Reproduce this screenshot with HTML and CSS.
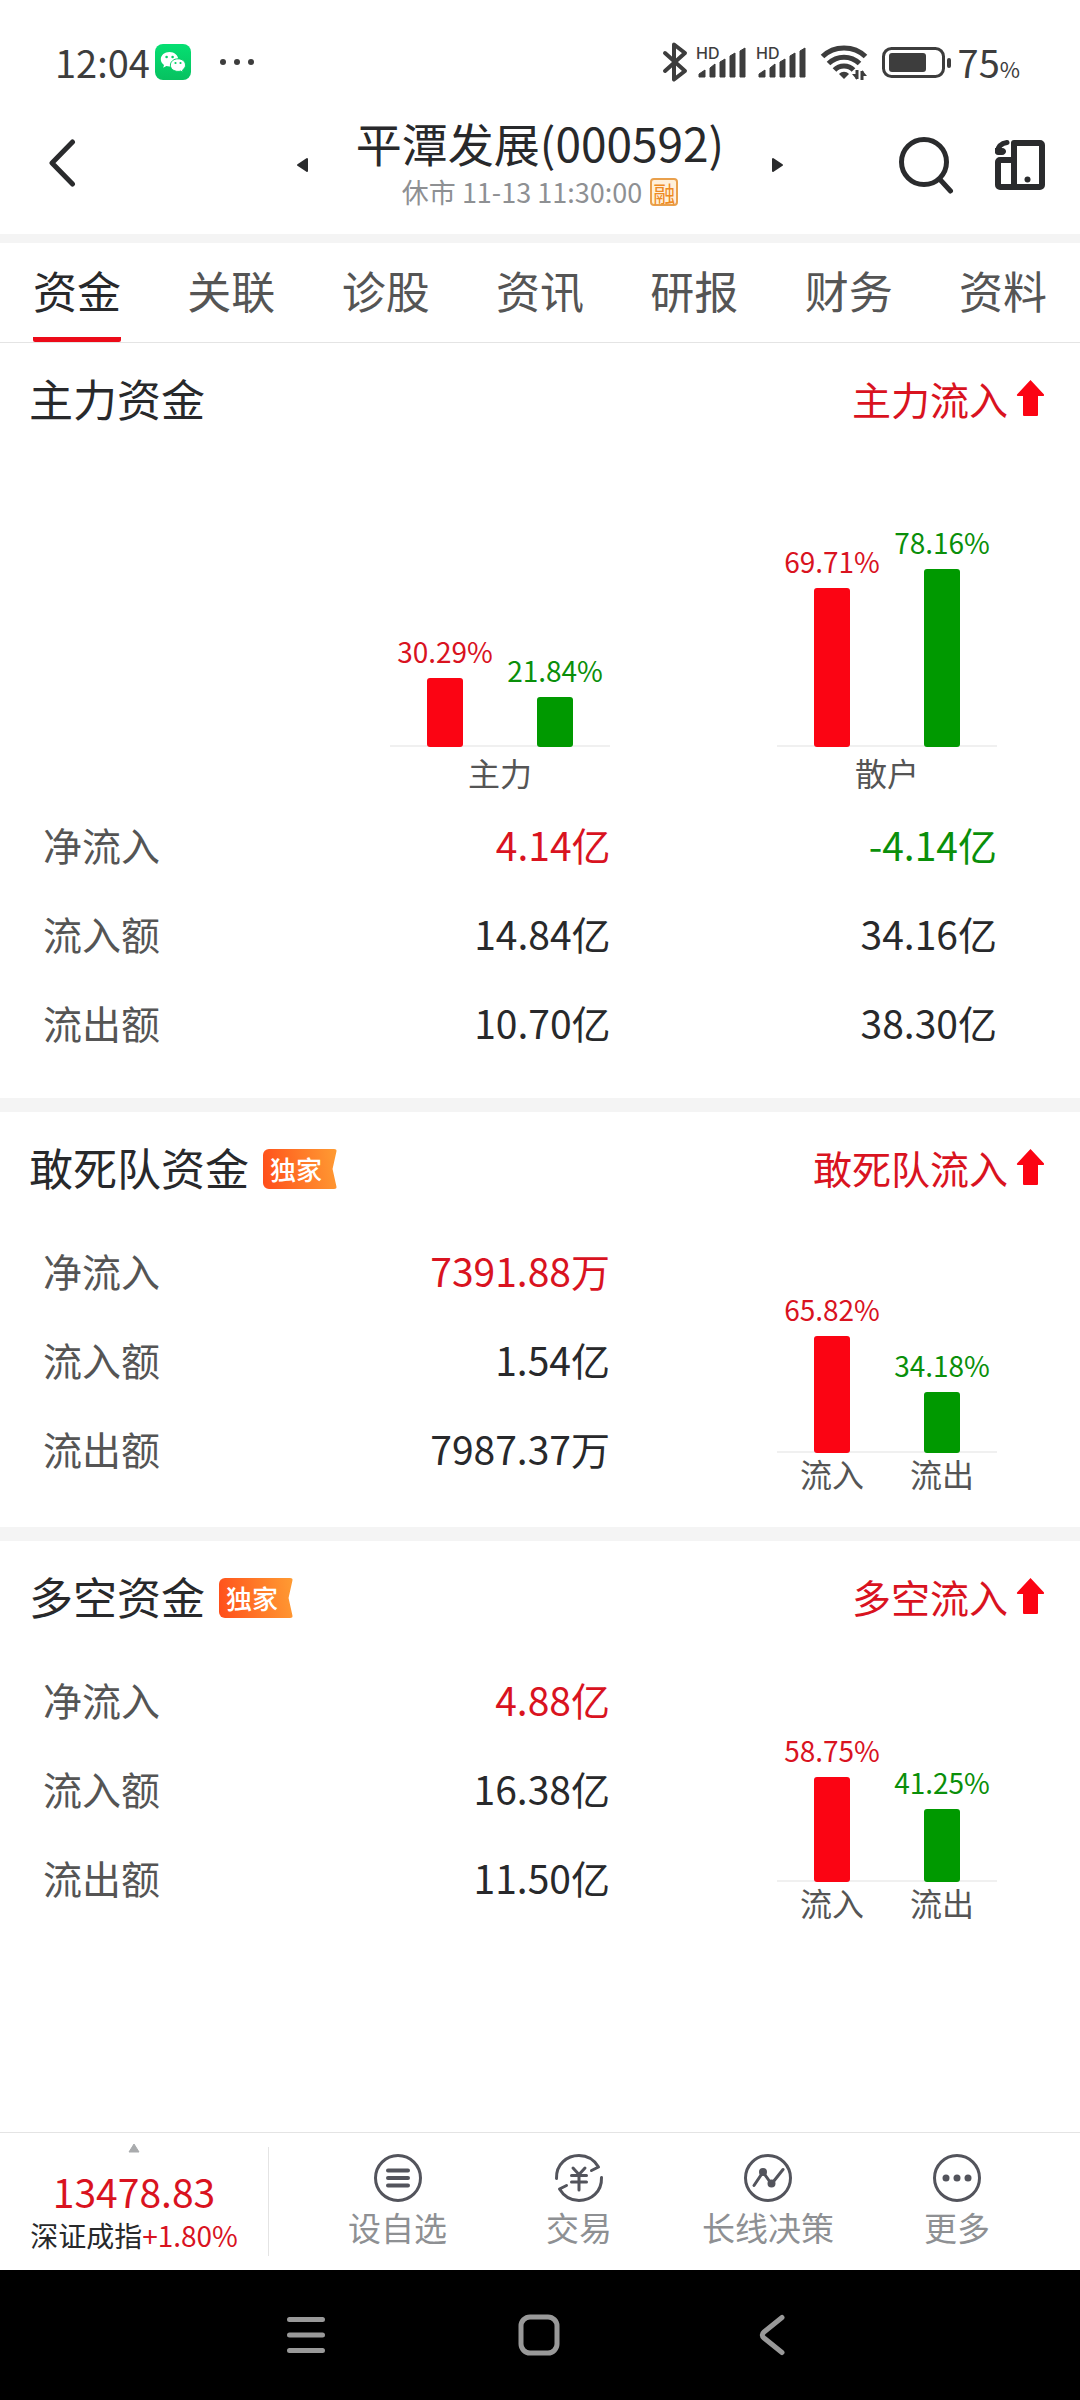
FILE: index.html
```html
<!DOCTYPE html>
<html lang="zh-CN">
<head>
<meta charset="utf-8">
<meta name="viewport" content="width=device-width">
<title>平潭发展(000592) 资金</title>
<link rel="stylesheet" href="styles.css">
</head>
<body>
<div class="status-bar">
  <div class="status-left">
    <span class="clock">12:04</span>
    <svg class="wechat" width="36" height="36" viewBox="0 0 36 36" aria-hidden="true">
      <defs><linearGradient id="wx" x1="0" y1="0" x2="0" y2="1"><stop offset="0" stop-color="#05df72"/><stop offset="1" stop-color="#07c160"/></linearGradient></defs>
      <rect width="36" height="36" rx="8" fill="url(#wx)"/>
      <path d="M14.500 8C9.600 8 5.800 11.200 5.800 15.300c0 2.400 1.200 4.300 3.200 5.700l-.8 2.700 3.200-1.600c1 .3 2 .4 3.100.4 4.900 0 8.700-3.200 8.700-7.200S19.400 8 14.500 8z" fill="#fff"/>
      <path d="M23 14.800c-4.400 0-7.600 2.900-7.600 6.300 0 3.500 3.200 6.300 7.600 6.300.9 0 1.800-.1 2.600-.4l2.500 1.300-.6-2.200c1.800-1.200 3-3 3-5 0-3.500-3.300-6.300-7.500-6.300z" fill="#fff" stroke="#06cf68" stroke-width="1"/>
      <circle cx="11.600" cy="13" r="1.300" fill="#06cf68"/><circle cx="17.600" cy="13" r="1.300" fill="#06cf68"/>
      <circle cx="20.500" cy="19" r="1.100" fill="#06cf68"/><circle cx="25.500" cy="19" r="1.100" fill="#06cf68"/>
    </svg>
    <svg width="36" height="8" viewBox="0 0 36 8" fill="#3d3d3d" aria-hidden="true"><circle cx="4" cy="4" r="3"/><circle cx="18" cy="4" r="3"/><circle cx="32" cy="4" r="3"/></svg>
  </div>
  <div class="status-right">
    <svg width="26" height="42" viewBox="0 0 26 42" fill="none" stroke="#3d3d3d" stroke-width="4" stroke-linecap="round" stroke-linejoin="round" aria-hidden="true"><path d="M3 12 23 30 12 38.500V3.500L23 12 3 30"/></svg>
    <svg class="signal" width="52" height="38" viewBox="0 0 52 38" aria-hidden="true">
      <text class="hd" x="0" y="16">HD</text>
      <path d="M3 34v-3l6-4v7zM14 34V25l5-4v13zM24 34V19l5-3v18zM34 34V13l5-3v24zM44 34V8l5-3v29z" fill="#3d3d3d" stroke="#3d3d3d" stroke-linejoin="round"/>
    </svg>
    <svg class="signal" width="52" height="38" viewBox="0 0 52 38" aria-hidden="true">
      <text class="hd" x="0" y="16">HD</text>
      <path d="M3 34v-3l6-4v7zM14 34V25l5-4v13zM24 34V19l5-3v18zM34 34V13l5-3v24zM44 34V8l5-3v29z" fill="#3d3d3d" stroke="#3d3d3d" stroke-linejoin="round"/>
    </svg>
    <svg class="wifi" width="48" height="38" viewBox="0 0 48 38" fill="none" stroke="#3d3d3d" stroke-width="5" aria-hidden="true">
      <path d="M2.500 13.500C14 2 34 2 45.500 13.500M8.500 20.500c8.500-8.500 22.500-8.500 31 0M14.500 27c5-5.500 14-5.500 19 0"/>
      <path d="M19 31c3-3 7-3 10 0l-5 5z" fill="#3d3d3d" stroke="none"/>
      <path d="M37 27v9M42 37v-9" stroke-width="3"/><path d="M32 31h5v6zM47 33h-5v-6z" fill="#3d3d3d" stroke="none"/>
    </svg>
    <svg class="battery" width="70" height="32" viewBox="0 0 70 32" aria-hidden="true">
      <rect x="1.500" y="2.500" width="60" height="28" rx="8" fill="none" stroke="#3d3d3d" stroke-width="3"/>
      <rect x="7" y="7" width="37" height="19" rx="3" fill="#3d3d3d"/><rect x="65" y="12" width="4" height="10" rx="2" fill="#3d3d3d"/>
    </svg>
    <span class="percent">75<small>%</small></span>
  </div>
</div>

<header class="header">
  <div class="header-left">
    <button class="icon-button" type="button" aria-label="返回"><svg width="28" height="50" viewBox="0 0 28 50" fill="none" stroke="#2a2b2d" stroke-width="5" stroke-linecap="round" stroke-linejoin="round"><path d="M24.500 4 4 25l20.500 21"/></svg></button>
  </div>
  <div class="switcher">
    <button class="icon-button" type="button" aria-label="上一只"><svg width="12" height="16" viewBox="0 0 12 16"><path d="M11 2v12L2 8z" fill="#2a2b2d" stroke="#2a2b2d" stroke-width="2" stroke-linejoin="round"/></svg></button>
    <div class="stock">
      <h1 class="stock-name">平潭发展(000592)</h1>
      <p class="stock-status">休市 11-13 11:30:00<span class="margin-tag">融</span></p>
    </div>
    <button class="icon-button" type="button" aria-label="下一只"><svg width="12" height="16" viewBox="0 0 12 16"><path d="M1 2v12l9-6z" fill="#2a2b2d" stroke="#2a2b2d" stroke-width="2" stroke-linejoin="round"/></svg></button>
  </div>
  <div class="header-right">
    <button class="icon-button" type="button" aria-label="搜索"><svg width="56" height="58" viewBox="0 0 56 58" fill="none" stroke="#2a2b2d" stroke-width="5" stroke-linecap="round"><circle cx="26" cy="26" r="22.500"/><path d="M42 43.500 52.500 55"/></svg></button>
    <button class="icon-button" type="button" aria-label="切换布局"><svg width="52" height="52" viewBox="0 0 52 52" fill="none" stroke="#2a2b2d" stroke-width="6" stroke-linejoin="round"><path d="M20 4h26a2 2 0 0 1 2 2v40a2 2 0 0 1-2 2H20zM20 21H6a2 2 0 0 0-2 2v23a2 2 0 0 0 2 2h14"/><path d="M13 3.500C7 4.500 4 8 3.500 12.500" stroke-width="5" stroke-linecap="round"/><path d="M1 9h7c3 0 4 2 4 3.500S10.500 16 8 16H4c-2 0-3-1.500-3-3z" fill="#2a2b2d" stroke="none"/><circle cx="33.500" cy="40.500" r="3" fill="#2a2b2d" stroke="none"/></svg></button>
  </div>
</header>

<nav class="tabs">
  <a class="tab tab-active" href="#zijin" aria-current="page">资金</a>
  <a class="tab" href="#guanlian">关联</a>
  <a class="tab" href="#zhengu">诊股</a>
  <a class="tab" href="#zixun">资讯</a>
  <a class="tab" href="#yanbao">研报</a>
  <a class="tab" href="#caiwu">财务</a>
  <a class="tab" href="#ziliao">资料</a>
</nav>

<main class="main" id="zijin">
  <section class="section section-main">
    <div class="section-head">
      <h2 class="section-title">主力资金</h2>
      <span class="trend">主力流入<svg width="29" height="38" viewBox="0 0 29 38"><path d="M14.500 1 28 15.500q.5 1.500-1 1.500h-5v19q0 1-1 1H8q-1 0-1-1V17H2q-1.500 0-1-1.500z" fill="#fb0413"/></svg></span>
    </div>
    <div class="fund-grid">
      <figure class="chart chart-tall chart-second">
        <div class="plot">
          <div class="bar-item up"><span class="bar-value">30.29%</span><span class="bar" style="--share:30.29"></span></div>
          <div class="bar-item down"><span class="bar-value">21.84%</span><span class="bar" style="--share:21.84"></span></div>
        </div>
        <figcaption class="axis"><span>主力</span></figcaption>
      </figure>
      <figure class="chart chart-tall">
        <div class="plot">
          <div class="bar-item up"><span class="bar-value">69.71%</span><span class="bar" style="--share:69.71"></span></div>
          <div class="bar-item down"><span class="bar-value">78.16%</span><span class="bar" style="--share:78.16"></span></div>
        </div>
        <figcaption class="axis"><span>散户</span></figcaption>
      </figure>
    </div>
    <div class="fund-grid">
      <table class="figures figures-wide">
        <colgroup><col class="col-label"><col><col></colgroup>
        <tr><th scope="row">净流入</th><td class="up">4.14亿</td><td class="down">-4.14亿</td></tr>
        <tr><th scope="row">流入额</th><td>14.84亿</td><td>34.16亿</td></tr>
        <tr><th scope="row">流出额</th><td>10.70亿</td><td>38.30亿</td></tr>
      </table>
    </div>
  </section>

  <section class="section">
    <div class="section-head">
      <h2 class="section-title">敢死队资金<span class="exclusive">独家</span></h2>
      <span class="trend">敢死队流入<svg width="29" height="38" viewBox="0 0 29 38"><path d="M14.500 1 28 15.500q.5 1.500-1 1.500h-5v19q0 1-1 1H8q-1 0-1-1V17H2q-1.500 0-1-1.500z" fill="#fb0413"/></svg></span>
    </div>
    <div class="fund-grid">
      <table class="figures">
        <tr><th scope="row">净流入</th><td class="up">7391.88万</td></tr>
        <tr><th scope="row">流入额</th><td>1.54亿</td></tr>
        <tr><th scope="row">流出额</th><td>7987.37万</td></tr>
      </table>
      <figure class="chart">
        <div class="plot">
          <div class="bar-item up"><span class="bar-value">65.82%</span><span class="bar" style="--share:65.82"></span></div>
          <div class="bar-item down"><span class="bar-value">34.18%</span><span class="bar" style="--share:34.18"></span></div>
        </div>
        <figcaption class="axis"><span>流入</span><span>流出</span></figcaption>
      </figure>
    </div>
  </section>

  <section class="section">
    <div class="section-head">
      <h2 class="section-title">多空资金<span class="exclusive">独家</span></h2>
      <span class="trend">多空流入<svg width="29" height="38" viewBox="0 0 29 38"><path d="M14.500 1 28 15.500q.5 1.500-1 1.500h-5v19q0 1-1 1H8q-1 0-1-1V17H2q-1.500 0-1-1.500z" fill="#fb0413"/></svg></span>
    </div>
    <div class="fund-grid">
      <table class="figures">
        <tr><th scope="row">净流入</th><td class="up">4.88亿</td></tr>
        <tr><th scope="row">流入额</th><td>16.38亿</td></tr>
        <tr><th scope="row">流出额</th><td>11.50亿</td></tr>
      </table>
      <figure class="chart">
        <div class="plot">
          <div class="bar-item up"><span class="bar-value">58.75%</span><span class="bar" style="--share:58.75"></span></div>
          <div class="bar-item down"><span class="bar-value">41.25%</span><span class="bar" style="--share:41.25"></span></div>
        </div>
        <figcaption class="axis"><span>流入</span><span>流出</span></figcaption>
      </figure>
    </div>
  </section>
</main>

<footer class="toolbar">
  <button class="index" type="button">
    <svg width="12" height="10" viewBox="0 0 12 10"><path d="M6 1 11 9H1z" fill="#a9abad" stroke="#a9abad" stroke-linejoin="round"/></svg>
    <span class="index-value">13478.83</span>
    <span class="index-name">深证成指<span class="up">+1.80%</span></span>
  </button>
  <div class="actions">
    <button class="action" type="button">
      <svg width="50" height="50" viewBox="0 0 50 50" fill="none" stroke="#53545c" stroke-width="3" stroke-linecap="round"><circle cx="25" cy="25" r="22.500"/><path d="M15 17.500h20M15 25h20M15 32.500h20" stroke-width="4"/></svg>设自选</button>
    <button class="action" type="button">
      <svg width="50" height="50" viewBox="0 0 50 50" fill="none" stroke="#53545c" stroke-width="3" stroke-linecap="round" stroke-linejoin="round"><path d="M2.500 25.500C2 11 13 2.500 25 2.500c8 0 15 4 19.500 11.500l-7 3.500M47.500 24.500C48 39 37 47.500 25 47.500 17 47.500 10 43.500 5.500 36l7-3.500"/><path d="M19 15l6 6.500 6-6.500M25 21.500V37M17.500 22.500h15M17.500 29h15"/></svg>交易</button>
    <button class="action" type="button">
      <svg width="50" height="50" viewBox="0 0 50 50" fill="none" stroke="#53545c" stroke-width="3" stroke-linecap="round" stroke-linejoin="round"><circle cx="25" cy="25" r="22.500"/><path d="M11 32.500 20 19l8.500 12L40 16.500"/><circle cx="20" cy="19" r="2.500" fill="#53545c"/><circle cx="28.500" cy="30.500" r="2.500" fill="#53545c"/></svg>长线决策</button>
    <button class="action" type="button">
      <svg width="50" height="50" viewBox="0 0 50 50" fill="#53545c"><circle cx="25" cy="25" r="22.500" fill="none" stroke="#53545c" stroke-width="3"/><circle cx="14" cy="25" r="3.500"/><circle cx="25" cy="25" r="3.500"/><circle cx="36" cy="25" r="3.500"/></svg>更多</button>
  </div>
</footer>

<div class="system-nav">
  <button class="system-button" type="button" aria-label="最近任务"><svg width="40" height="40" viewBox="0 0 40 40" stroke="#999" stroke-width="5" stroke-linecap="round"><path d="M3.500 4.500h33M3.500 20h33M3.500 35.500h33"/></svg></button>
  <button class="system-button" type="button" aria-label="主屏幕"><svg width="42" height="42" viewBox="0 0 42 42" fill="none" stroke="#999" stroke-width="5"><rect x="3" y="3" width="36" height="36" rx="9"/></svg></button>
  <button class="system-button" type="button" aria-label="返回"><svg width="28" height="42" viewBox="0 0 28 42" fill="none" stroke="#999" stroke-width="5" stroke-linecap="round"><path d="M24 3.500 6 18q-3.500 3 0 6L24 38.500"/></svg></button>
</div>
</body>
</html>
```

FILE: styles.css
```css
* {
  box-sizing: border-box;
}

:root {
  --text: #28292b;
  --label: #555;
  --muted: #8e9093;
  --band: #f4f4f4;
  --line: #e4e4e4;
  --red: #d9131f;
  --green: #0a8f0a;
}

body {
  margin: 0;
  min-height: 100vh;
  display: flex;
  flex-direction: column;
  background: #fff;
  color: var(--text);
  font-family: "Noto Sans CJK SC", sans-serif;
}

h1, h2, p, figure {
  margin: 0;
  font-weight: 400;
}

svg {
  display: block;
  flex: none;
}

button {
  padding: 0;
  border: 0;
  background: none;
  color: inherit;
  font: inherit;
}

.up {
  color: var(--red);
}

.down {
  color: var(--green);
}

/* Status bar */
.status-bar {
  display: flex;
  justify-content: space-between;
  padding: 32px 60px 4px 55px;
  line-height: 60px;
  font-size: 38px;
  color: #3d3d3d;
}

.status-left,
.status-right {
  display: flex;
  align-items: center;
}

.wechat {
  margin: 0 28px 0 5px;
}

.signal {
  margin-left: 8px;
}

.hd {
  font: 500 16px "Inter", sans-serif;
  fill: #3d3d3d;
}

.wifi {
  margin-left: 12px;
}

.battery {
  margin: 0 6px 0 14px;
}

.percent small {
  font-size: 22px;
  line-height: 24px;
}

/* Header */
.header {
  display: grid;
  grid-template-columns: 1fr auto 1fr;
  align-items: center;
  min-height: 138px;
  padding: 0 34px 0 48px;
}

.header-right {
  display: flex;
  justify-content: flex-end;
  align-items: center;
  gap: 40px;
}

.switcher {
  display: flex;
  align-items: center;
  justify-content: space-between;
  gap: 48px;
  margin-right: 14px;
}

.stock {
  text-align: center;
}

.stock-name {
  font-size: 46px;
  line-height: 54px;
}

.stock-status {
  display: flex;
  align-items: center;
  justify-content: center;
  gap: 8px;
  font-size: 27px;
  line-height: 46px;
  color: var(--muted);
}

.margin-tag {
  display: flex;
  justify-content: center;
  width: 28px;
  border: 2px solid #e9a04c;
  border-radius: 4px;
  background: #fff0da;
  font-size: 22px;
  line-height: 24px;
  color: #ee8a22;
}

/* Tabs */
.tabs {
  display: flex;
  justify-content: space-between;
  padding: 0 33px;
  border-top: 9px solid var(--band);
  border-bottom: 1px solid var(--line);
}

.tab {
  padding: 18px 0;
  border-bottom: 5px solid transparent;
  font-size: 44px;
  line-height: 58px;
  color: var(--label);
  text-decoration: none;
}

.tab-active {
  border-color: #ec0a18;
  border-radius: 2px;
  color: var(--text);
}

/* Fund sections */
.main {
  flex: 1;
}

.section {
  padding-bottom: 32px;
}

.section + .section {
  border-top: 14px solid var(--band);
}

.section-main {
  padding-bottom: 29px;
}

.section-head {
  display: flex;
  align-items: center;
  justify-content: space-between;
  padding: 25px 35px 31px 29px;
  line-height: 60px;
}

.section-title {
  display: flex;
  align-items: center;
  font-size: 44px;
}

.trend {
  display: flex;
  align-items: center;
  gap: 8px;
  font-size: 39px;
  color: var(--red);
}

.exclusive {
  display: block;
  width: 74px;
  margin: 4px 0 0 14px;
  padding-left: 7px;
  border-radius: 6px 3px 3px 6px;
  background: linear-gradient(80deg, #ff4d1a, #ff7a28 55%, #ff9c33);
  clip-path: polygon(0 0, 100% 0, 94% 50%, 100% 100%, 0 100%);
  font-size: 26px;
  font-weight: 500;
  line-height: 40px;
  color: #fff;
}

.fund-grid {
  display: grid;
  grid-template-columns: 180fr 387fr 387fr;
  align-items: end;
  padding: 0 83px 0 43px;
}

.figures {
  grid-column: span 2;
  width: 100%;
  border-collapse: collapse;
  table-layout: fixed;
  font-size: 39px;
  line-height: 85px;
}

.figures-wide {
  grid-column: span 3;
}

.col-label {
  width: 19%;
}

.figures th,
.figures td {
  padding: 0 0 4px;
  font-weight: 400;
}

.figures th {
  text-align: left;
  color: var(--label);
}

.figures td {
  text-align: right;
}

/* Bar charts */
.chart {
  --scale: 178px;
  width: 220px;
  justify-self: end;
}

.chart-tall {
  --scale: 228px;
  padding: 60px 0 10px;
}

.chart-second {
  grid-column: 2;
}

.plot {
  display: grid;
  grid-template-columns: 1fr 1fr;
  height: var(--scale);
  background: linear-gradient(#f0f0f0, #f0f0f0) bottom / 100% 2px no-repeat;
}

.bar-item {
  display: flex;
  flex-direction: column;
  align-items: center;
  justify-content: flex-end;
}

.bar-value {
  margin-bottom: 9px;
  font-size: 28px;
  line-height: 36px;
}

.bar {
  flex: none;
  width: 36px;
  height: calc(var(--share) * var(--scale) / 100);
  border-radius: 3px;
  background: #fb0413;
}

.down .bar {
  background: #009900;
}

.axis {
  display: flex;
  justify-content: space-around;
  padding-bottom: 2px;
  font-size: 32px;
  line-height: 40px;
  color: var(--label);
}

.chart-tall .axis {
  padding: 5px 0 0;
}

/* Bottom toolbar */
.toolbar {
  display: flex;
  border-top: 1px solid var(--line);
}

.index {
  display: flex;
  flex-direction: column;
  align-items: center;
  flex: none;
  width: 269px;
  margin: 14px 0;
  border-right: 1px solid var(--line);
}

.index svg {
  margin-top: -4px;
}

.index-value {
  padding-top: 12px;
  font-size: 39px;
  line-height: 52px;
  color: var(--red);
}

.index-name {
  font-size: 28px;
  line-height: 36px;
  white-space: nowrap;
}

.actions {
  flex: 1;
  display: flex;
  justify-content: space-between;
  padding: 20px 90px 22px 79px;
}

.action {
  display: flex;
  flex-direction: column;
  align-items: center;
  gap: 3px;
  font-size: 33px;
  line-height: 42px;
  color: var(--muted);
}

.action:first-child {
  margin-right: 9px;
}

/* System navigation */
.system-nav {
  display: flex;
  justify-content: center;
  padding-right: 2px;
  background: #000;
}

.system-button {
  display: flex;
  align-items: center;
  justify-content: center;
  width: 233px;
  height: 130px;
}
```
